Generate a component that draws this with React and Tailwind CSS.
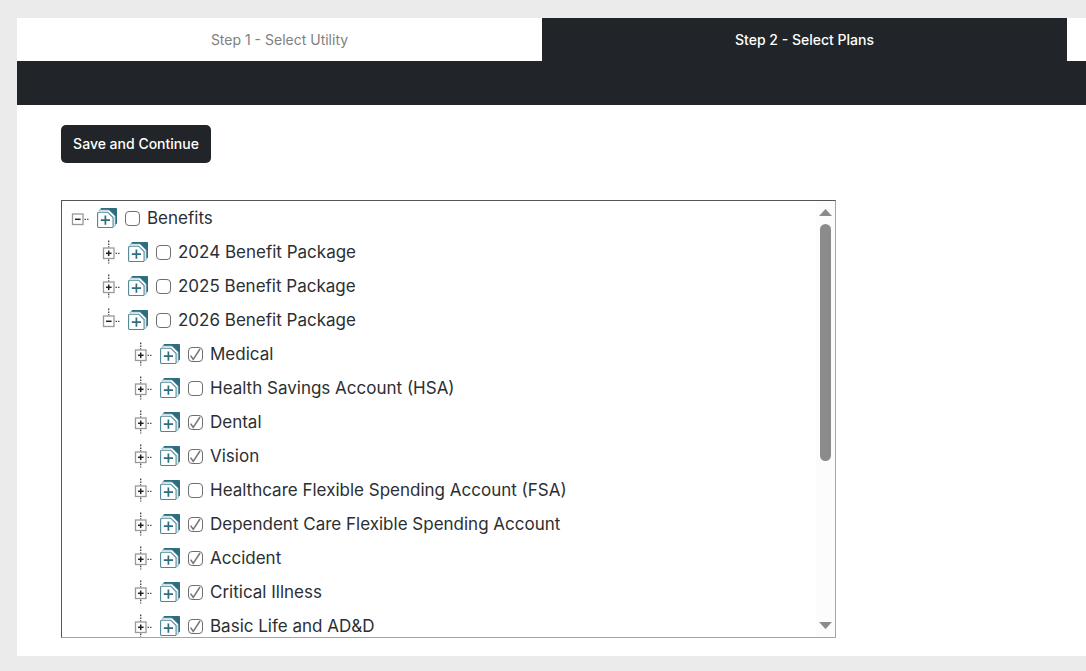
import { useState } from "react";

const ITEMS = [
  { level: 0, label: "Benefits", open: true, checked: false },
  { level: 1, label: "2024 Benefit Package", open: false, checked: false },
  { level: 1, label: "2025 Benefit Package", open: false, checked: false },
  { level: 1, label: "2026 Benefit Package", open: true, checked: false, last: true },
  { level: 2, label: "Medical", open: false, checked: true },
  { level: 2, label: "Health Savings Account (HSA)", open: false, checked: false },
  { level: 2, label: "Dental", open: false, checked: true },
  { level: 2, label: "Vision", open: false, checked: true },
  { level: 2, label: "Healthcare Flexible Spending Account (FSA)", open: false, checked: false },
  { level: 2, label: "Dependent Care Flexible Spending Account", open: false, checked: true },
  { level: 2, label: "Accident", open: false, checked: true },
  { level: 2, label: "Critical Illness", open: false, checked: true },
  { level: 2, label: "Basic Life and AD&D", open: false, checked: true },
];

const INDENT = ["pl-[9px]", "pl-10", "pl-[72px]"];

function Expander({ item }) {
  return (
    <button
      type="button"
      aria-label={(item.open ? "Collapse " : "Expand ") + item.label}
      className="h-6 w-[18px] shrink-0"
    >
      <svg width="18" height="24" viewBox="0 0 18 24" fill="none">
        {item.level > 0 && <path d="M6.700 .5v7" stroke="#444" strokeWidth="1.300" strokeDasharray="1.700 1.200" />}
        {item.level > 0 && !item.last && (
          <path d="M6.700 19.500v4" stroke="#444" strokeWidth="1.300" strokeDasharray="1.700 1.200" />
        )}
        <rect x="1.500" y="8" width="10.500" height="10.500" fill="#fff" stroke="#999" strokeWidth="1.300" />
        <path d="M4 13.300h5.600" stroke="#222" strokeWidth="1.500" />
        {!item.open && <path d="M6.700 10.500v5.600" stroke="#222" strokeWidth="1.500" />}
        <path d="M13.500 13.300h4" stroke="#555" strokeWidth="1.300" strokeDasharray="1.500 1" />
      </svg>
    </button>
  );
}

function PlanIcon() {
  return (
    <svg className="ml-2 shrink-0" width="20" height="20" viewBox="0 0 20 20" aria-hidden="true">
      <path d="M4.500 0h14.700a.8.8 0 0 1 .8.8V15.200a1 1 0 0 1-1 1h-1V8L11.800 2H3.500V1a1 1 0 0 1 1-1Z" fill="#2e6c80" />
      <path d="M2.300 3.200v-.6a.7.7 0 0 1 .7-.7h9l6.200 6.100v9.400a.8.8 0 0 1-.8.8h-.6" fill="#fff" stroke="#6b9aa9" strokeWidth="0.800" />
      <path
        d="M1.700 4.200h9l5.400 5.300v8.900a1.100 1.100 0 0 1-1.100 1.100H1.700A1.100 1.100 0 0 1 .6 18.400V5.300a1.100 1.100 0 0 1 1.100-1.100Z"
        fill="#fff"
        stroke="#4e8798"
        strokeWidth="1.100"
      />
      <path d="M8.400 7.500v9.200M3.800 12.100h9.200" stroke="#2e6c80" strokeWidth="1.700" />
    </svg>
  );
}

function TreeRow({ item, index }) {
  const [checked, setChecked] = useState(item.checked);
  const id = "plan-" + index;
  return (
    <li className={"flex h-[34px] items-center " + INDENT[item.level]}>
      <Expander item={item} />
      <PlanIcon />
      <span className="ml-2 grid size-[15px] shrink-0">
        <input
          id={id}
          type="checkbox"
          checked={checked}
          onChange={() => setChecked(!checked)}
          className="peer col-start-1 row-start-1 size-[15px] appearance-none rounded-[4px] border border-[#6f6f6f] bg-white"
        />
        <svg
          className="pointer-events-none invisible col-start-1 row-start-1 peer-checked:visible"
          width="15"
          height="15"
          viewBox="0 0 15 15"
          fill="none"
          aria-hidden="true"
        >
          <path d="M2.600 8.600 5.200 12.300 12 2" stroke="#777" strokeWidth="1.500" />
        </svg>
      </span>
      <label htmlFor={id} className="pl-[7px] text-[17px] leading-6 whitespace-nowrap text-[#2b2f33]">
        {item.label}
      </label>
    </li>
  );
}

function ScrollBar() {
  return (
    <div className="flex w-[19px] shrink-0 flex-col items-center bg-[#fcfcfc] py-2" aria-hidden="true">
      <svg width="13" height="7" viewBox="0 0 13 7">
        <path d="M6.500 0 13 7H0Z" fill="#8b8b8b" />
      </svg>
      <div className="flex w-[11px] grow flex-col py-2">
        <div className="h-[237px] rounded-full bg-[#8b8b8b]" />
      </div>
      <svg width="13" height="7" viewBox="0 0 13 7">
        <path d="M0 0h13L6.500 7Z" fill="#8b8b8b" />
      </svg>
    </div>
  );
}

export default function App() {
  return (
    <div className="min-h-screen overflow-hidden bg-[#ebebeb] pt-[18px] pb-[15px] pl-[17px] font-['Inter',sans-serif]">
      <main className="bg-white">
        <nav className="flex overflow-hidden text-sm leading-5">
          <a href="#step-1" className="w-[525px] shrink-0 pt-3 pb-[11px] text-center text-[#808080]">
            Step 1 - Select Utility
          </a>
          <a
            href="#step-2"
            aria-current="step"
            className="w-[525px] shrink-0 bg-[#212529] pt-3 pb-[11px] text-center font-medium text-white"
          >
            Step 2 - Select Plans
          </a>
        </nav>
        <div className="h-11 bg-[#212529]" />
        <div className="px-11 pt-5 pb-[18px]">
          <button
            type="button"
            className="flex h-[38px] w-[150px] items-center justify-center rounded-[5px] bg-[#212529] text-sm font-medium whitespace-nowrap text-white"
          >
            Save and Continue
          </button>
          <div className="mt-[37px] flex h-[438px] max-w-[775px] border border-t-[#555] border-r-[#a5a5a5] border-b-[#a5a5a5] border-l-[#555]">
            <ul className="min-w-0 grow overflow-y-auto [scrollbar-width:none]">
              {ITEMS.map((item, index) => (
                <TreeRow key={item.label} item={item} index={index} />
              ))}
            </ul>
            <ScrollBar />
          </div>
        </div>
      </main>
    </div>
  );
}
